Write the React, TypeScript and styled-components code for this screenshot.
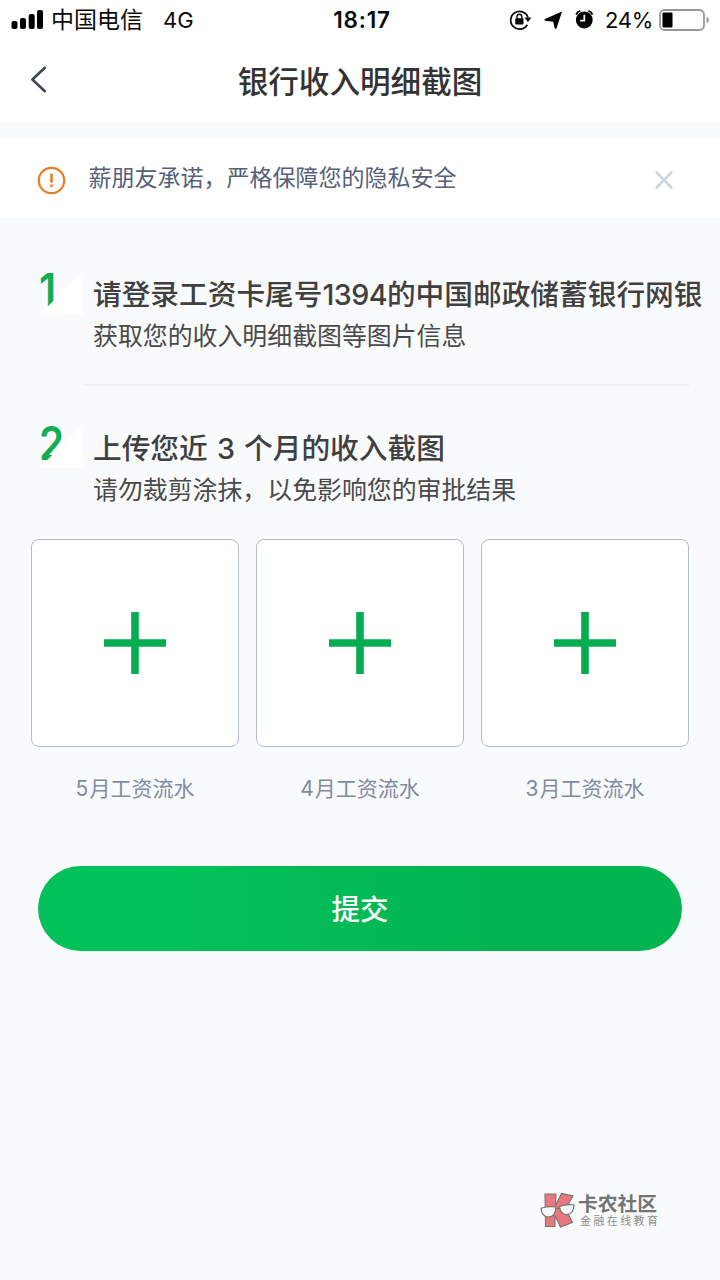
import React from "react";
import styled, { createGlobalStyle } from "styled-components";

const GlobalStyle = createGlobalStyle`
  * { box-sizing: border-box; }
  body {
    margin: 0;
    background: #f9fafc;
    font-family: Inter, "Noto Sans CJK SC", sans-serif;
  }
  button { font-family: inherit; border: 0; padding: 0; background: none; }
  svg { display: block; }
`;

const Screen = styled.div`
  position: relative;
  width: 720px;
  height: 1280px;
  overflow: hidden;
  display: flex;
  flex-direction: column;
  background: #f9fafc;
`;

const StatusBar = styled.div`
  display: grid;
  grid-template-columns: 1fr auto 1fr;
  align-items: center;
  height: 40px;
  padding: 0 10px 0 11px;
  background: #fff;
  color: #0a0a0a;
  font-size: 22px;
  line-height: 40px;
  white-space: nowrap;
`;

const StatusGroup = styled.div<{ $end?: boolean }>`
  display: flex;
  align-items: center;
  justify-content: ${(p) => (p.$end ? "flex-end" : "flex-start")};
`;

const Carrier = styled.span`
  margin-left: 7px;
  font-size: 23px;
`;

const Network = styled.span`
  margin-left: 20px;
`;

const Clock = styled.span`
  padding-left: 3px;
  font-size: 22.5px;
  font-weight: 600;
  letter-spacing: 0.8px;
`;

const Battery = styled.span`
  margin: 0 6px 0 9px;
  letter-spacing: -0.3px;
`;

const NavBar = styled.header`
  display: grid;
  grid-template-columns: 80px 1fr 80px;
  align-items: center;
  height: 83px;
  background: #fff;
`;

const BackButton = styled.button`
  padding: 0 0 4px 30px;
`;

const Title = styled.h1`
  margin: 0;
  text-align: center;
  color: #333;
  font-size: 30.6px;
  font-weight: 500;
  line-height: 83px;
`;

const Notice = styled.div`
  display: flex;
  align-items: center;
  height: 79px;
  margin-top: 15px;
  padding: 5px 46px 0 37px;
  background: #fff;
`;

const NoticeText = styled.span`
  flex: 1;
  margin: 0 0 4px 22.5px;
  color: #56607a;
  font-size: 23px;
  line-height: 34px;
`;

const Step = styled.section<{ $divided?: boolean }>`
  display: flex;
  height: ${(p) => (p.$divided ? "168px" : "153px")};
  padding-top: ${(p) => (p.$divided ? "55px" : "39px")};
`;

const StepMark = styled.div`
  position: relative;
  width: 44px;
  height: 43px;
  margin: 0 10px 0 39px;
  color: #14ab55;
  font-size: 46px;
  font-weight: 600;
  line-height: 36px;
`;

const StepDigit = styled.span`
  display: inline-block;
  transform: scaleX(0.88);
  transform-origin: 0 0;
`;

const Fold = styled.i`
  position: absolute;
  inset: 0;
  background: #fff;
  clip-path: polygon(100% 0, 100% 100%, 0 100%);
`;

const StepBody = styled.div<{ $offset: number }>`
  flex: 1;
  padding-top: ${(p) => p.$offset}px;
  white-space: nowrap;
`;

const StepTitle = styled.h2<{ $wordGap?: string }>`
  margin: 0;
  color: #404040;
  font-size: 28.7px;
  font-weight: 500;
  line-height: 40px;
  word-spacing: ${(p) => p.$wordGap ?? "normal"};
`;

const CardDigits = styled.span`
  letter-spacing: -0.6px;
`;

const StepText = styled.p`
  margin: 0;
  color: #4a4a4a;
  font-size: 24.9px;
  line-height: 42px;
`;

const Divider = styled.hr`
  width: 605px;
  height: 2px;
  margin: -1px 0 0 84px;
  border: 0;
  background: #edeff2;
`;

const Uploads = styled.div`
  display: grid;
  grid-template-columns: repeat(3, 208px);
  justify-content: space-between;
  padding: 0 31px;
`;

const UploadItem = styled.div`
  display: flex;
  flex-direction: column;
  align-items: center;
`;

const UploadBox = styled.button`
  display: grid;
  place-items: center;
  width: 208px;
  height: 208px;
  border: 1px solid #b2bbcc;
  border-radius: 8px;
  background: #fff;
`;

const UploadLabel = styled.span`
  margin-top: 26px;
  color: #808ba3;
  font-size: 21px;
  line-height: 32px;
`;

const MonthDigit = styled.span`
  margin-right: 1px;
`;

const Submit = styled.button`
  width: 644px;
  height: 85px;
  margin: 61px 0 0 38px;
  border-radius: 43px;
  background: linear-gradient(90deg, #03c15a 20%, #02b551 70%);
  color: #fff;
  font-size: 28.5px;
  font-weight: 500;
  line-height: 87px;
`;

const Watermark = styled.div`
  position: absolute;
  left: 540px;
  top: 1192px;
  display: flex;
  gap: 3px;
`;

const WatermarkName = styled.div`
  color: #747474;
  font-size: 19.800px;
  font-weight: 700;
  line-height: 24px;
`;

const WatermarkTag = styled.div`
  padding-left: 2px;
  color: #8d8d8d;
  font-size: 11px;
  letter-spacing: 2.4px;
  line-height: 11px;
`;

const months = [5, 4, 3];

export default function App() {
  return (
    <Screen>
      <GlobalStyle />
      <StatusBar>
        <StatusGroup>
          <svg width="33" height="20" viewBox="0 0 33 20">
            <rect x="0.5" y="11" width="6" height="8" rx="2" />
            <rect x="9" y="8" width="6" height="11" rx="2" />
            <rect x="17.7" y="4" width="6" height="15" rx="2" />
            <rect x="26" y="0" width="6" height="19" rx="2" />
          </svg>
          <Carrier>中国电信</Carrier>
          <Network>4G</Network>
        </StatusGroup>
        <Clock>18:17</Clock>
        <StatusGroup $end>
          <svg width="88" height="24" viewBox="508 8 88 24">
            <path d="M527.3 24.8A8.9 8.9 0 1 1 528 17.3" fill="none" stroke="#0a0a0a" strokeWidth="1.7" />
            <path d="M524.4 17.5h7l-3.4 4.4z" />
            <rect x="515.3" y="18.3" width="8.2" height="6.3" rx="0.8" />
            <path d="M517 19v-2.3a2.4 2.4 0 0 1 4.8 0V19" fill="none" stroke="#0a0a0a" strokeWidth="1.4" />
            <path d="M562 11.5L556.6 28.2Q555.4 29.5 554.6 28L553.2 21.8L545.2 20.8Q543.6 20 545 18.9Z" />
            <circle cx="584.3" cy="20" r="8.4" />
            <path d="M576.2 14.6q1-2.9 4.1-3.7M592.4 14.6q-1-2.9-4.1-3.7" fill="none" stroke="#0a0a0a" strokeWidth="2" />
            <path d="M584.3 14.8v5.8h-4.2" fill="none" stroke="#fff" strokeWidth="1.7" />
          </svg>
          <Battery>24%</Battery>
          <svg width="51" height="22" viewBox="0 0 51 22">
            <rect x="1" y="1" width="44" height="20" rx="4.5" fill="#fff" stroke="#999" strokeWidth="1.8" />
            <rect x="3.5" y="3.5" width="10" height="15" rx="1" />
            <path d="M47.5 7.5q5 3.5 0 7z" fill="#999" />
          </svg>
        </StatusGroup>
      </StatusBar>
      <NavBar>
        <BackButton aria-label="返回">
          <svg width="18" height="28" viewBox="0 0 18 28">
            <path d="M14.8 1.8L2.4 13.5L14.8 25.2" fill="none" stroke="#3d465c" strokeWidth="2.6" strokeLinecap="round" strokeLinejoin="round" />
          </svg>
        </BackButton>
        <Title>银行收入明细截图</Title>
      </NavBar>
      <Notice>
        <svg width="29" height="29" viewBox="0 0 29 29">
          <circle cx="14.5" cy="14.5" r="12.7" fill="none" stroke="#e87c25" strokeWidth="2.2" />
          <path d="M14.5 7.8v8.7M14.5 18.6v2.4" stroke="#e87c25" strokeWidth="2.6" />
        </svg>
        <NoticeText>薪朋友承诺，严格保障您的隐私安全</NoticeText>
        <svg width="20" height="20" viewBox="0 0 20 20">
          <path d="M2.5 2.5l15 15M17.5 2.5l-15 15" stroke="#ced5de" strokeWidth="2.6" strokeLinecap="round" />
        </svg>
      </Notice>
      <Step $divided>
        <StepMark>
          <StepDigit>1</StepDigit>
          <Fold />
        </StepMark>
        <StepBody $offset={3}>
          <StepTitle>
            请登录工资卡尾号<CardDigits>1394</CardDigits>的中国邮政储蓄银行网银
          </StepTitle>
          <StepText>获取您的收入明细截图等图片信息</StepText>
        </StepBody>
      </Step>
      <Divider />
      <Step>
        <StepMark>
          <StepDigit>2</StepDigit>
          <Fold />
        </StepMark>
        <StepBody $offset={4}>
          <StepTitle $wordGap="1.5px">上传您近 3 个月的收入截图</StepTitle>
          <StepText>请勿裁剪涂抹，以免影响您的审批结果</StepText>
        </StepBody>
      </Step>
      <Uploads>
        {months.map((m) => (
          <UploadItem key={m}>
            <UploadBox aria-label={`${m}月`}>
              <svg width="62" height="62" viewBox="0 0 62 62">
                <path d="M31 0v62M0 31h62" stroke="#05ad50" strokeWidth="7.6" />
              </svg>
            </UploadBox>
            <UploadLabel>
              <MonthDigit>{m}</MonthDigit>月工资流水
            </UploadLabel>
          </UploadItem>
        ))}
      </Uploads>
      <Submit>提交</Submit>
      <Watermark>
        <svg width="35" height="36" viewBox="0 0 35 36">
          <path d="M5 2h11l-.5 11.5L21.5 1.5 33 4l-7.5 13 7 13.5-12 4.5L15 23.5V34.500H5.500z" fill="#e87780" stroke="#747474" strokeWidth="1.1" />
          <path d="M1 16.200q7-2.200 15-1.200-.3 9.500-7.500 10Q1.500 24.500 1 16.200zM19.500 14.500q7-2.500 14.500-1.500-.5 9-7 9.700-6.500-.2-7.500-8.200z" fill="#f8f8f8" stroke="#747474" strokeWidth="1.2" />
          <path d="M16 17q2-1.500 3.800-.5" fill="none" stroke="#747474" strokeWidth="1.2" />
        </svg>
        <div>
          <WatermarkName>卡农社区</WatermarkName>
          <WatermarkTag>金融在线教育</WatermarkTag>
        </div>
      </Watermark>
    </Screen>
  );
}
